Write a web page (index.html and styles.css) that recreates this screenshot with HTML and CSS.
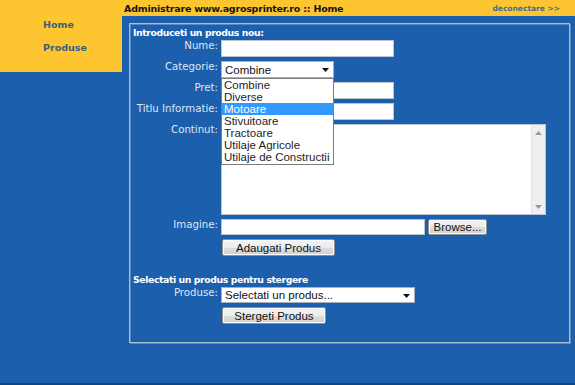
FILE: index.html
```html
<!DOCTYPE html>
<html>
<head>
<meta charset="utf-8">
<link rel="stylesheet" href="styles.css">
</head>
<body>
<div class="page">
  <aside class="sidebar">
    <a class="nav-link" href="#">Home</a>
    <a class="nav-link" href="#">Produse</a>
  </aside>
  <div class="main">
    <header class="topbar">
      <span class="title">Administrare www.agrosprinter.ro :: Home</span>
      <a class="logout" href="#">deconectare &gt;&gt;</a>
    </header>
    <div class="content">
      <div class="panel">
        <div class="section-title">Introduceti un produs nou:</div>
        <div class="form">
          <label class="lbl">Nume:</label>
          <div class="field"><input class="txt w-std" type="text"></div>

          <label class="lbl">Categorie:</label>
          <div class="field">
            <div class="select w-cat">
              <span class="select-val">Combine</span>
              <svg class="arrow" width="7" height="4" viewBox="0 0 7 4"><path d="M0 0h7L3.5 4z" fill="#111"/></svg>
              <ul class="dropdown">
                <li>Combine</li>
                <li>Diverse</li>
                <li class="hl">Motoare</li>
                <li>Stivuitoare</li>
                <li>Tractoare</li>
                <li>Utilaje Agricole</li>
                <li>Utilaje de Constructii</li>
              </ul>
            </div>
          </div>

          <label class="lbl">Pret:</label>
          <div class="field"><input class="txt w-std" type="text"></div>

          <label class="lbl">Titlu Informatie:</label>
          <div class="field"><input class="txt w-std" type="text"></div>

          <label class="lbl">Continut:</label>
          <div class="field">
            <div class="area-box">
              <textarea class="area"></textarea>
              <div class="scrollbar">
                <svg width="7" height="4" viewBox="0 0 7 4"><path d="M0 4h7L3.5 0z" fill="#9a9a9a"/></svg>
                <svg width="7" height="4" viewBox="0 0 7 4"><path d="M0 0h7L3.5 4z" fill="#9a9a9a"/></svg>
              </div>
            </div>
          </div>

          <label class="lbl">Imagine:</label>
          <div class="field file-row">
            <input class="txt w-file" type="text">
            <button class="btn w-browse" type="button">Browse...</button>
          </div>

          <span></span>
          <div class="field"><button class="btn w-add" type="button">Adaugati Produs</button></div>
        </div>

        <div class="section-title second">Selectati un produs pentru stergere</div>
        <div class="form">
          <label class="lbl">Produse:</label>
          <div class="field">
            <div class="select w-prod">
              <span class="select-val">Selectati un produs...</span>
              <svg class="arrow" width="7" height="4" viewBox="0 0 7 4"><path d="M0 0h7L3.5 4z" fill="#111"/></svg>
            </div>
          </div>
          <span></span>
          <div class="field"><button class="btn w-del" type="button">Stergeti Produs</button></div>
        </div>
      </div>
    </div>
  </div>
</div>
</body>
</html>
```
FILE: styles.css
```css
html, body {
  margin: 0;
  padding: 0;
}
body {
  background: #1b5fad;
  font-family: "DejaVu Sans", Verdana, sans-serif;
}
.page {
  display: flex;
  align-items: flex-start;
  height: 383px;
  border-bottom: 2px solid #0f4684;
}
.sidebar {
  width: 122px;
  height: 72px;
  background: #fdc530;
  display: flex;
  flex-direction: column;
  padding: 18px 0 0 43px;
  box-sizing: border-box;
  gap: 10px;
}
.nav-link {
  color: #3d5e78;
  font-weight: bold;
  font-size: 9.5px;
  text-decoration: none;
  line-height: 13px;
}
.main {
  flex: 1;
  display: flex;
  flex-direction: column;
}
.topbar {
  height: 16px;
  background: #fdc530;
  display: flex;
  align-items: center;
  justify-content: space-between;
  padding: 0 15px 0 2px;
}
.title {
  font-weight: bold;
  font-size: 9.5px;
  letter-spacing: -0.22px;
  color: #151515;
}
.logout {
  font-weight: bold;
  font-size: 7.5px;
  color: #3d6f8c;
  text-decoration: none;
}
.content {
  padding: 7px 5px 0 7px;
}
.panel {
  width: 441px;
  height: 320px;
  box-sizing: border-box;
  border: 1px solid #a8c0d2;
  box-shadow: inset 1px 1px 0 #5f86b4, 1px 1px 0 #5f86b4;
  padding: 3px 0 0 3px;
}
.section-title {
  color: #ffffff;
  font-weight: bold;
  font-size: 9.3px;
  letter-spacing: -0.4px;
  line-height: 11px;
  margin-bottom: 2px;
}
.section-title.second {
  margin-top: 18px;
  margin-bottom: 2px;
}
.form {
  display: grid;
  grid-template-columns: 85px auto;
  column-gap: 3px;
  row-gap: 4px;
  align-items: start;
}
.lbl {
  color: #dde7f2;
  font-size: 10.2px;
  text-align: right;
  line-height: 10px;
  margin-left: -8px;
  padding-top: 1px;
}
.field {
  display: flex;
  align-items: center;
}
.txt {
  height: 17px;
  box-sizing: border-box;
  border: 1px solid #b9c4cf;
  background: #fff;
  margin: 0;
  padding: 0 2px;
}
.w-std { width: 173px; }
.w-file { width: 204px; height: 16px; }
.file-row { gap: 3px; }
.select {
  position: relative;
  height: 17px;
  box-sizing: border-box;
  background: #fff;
  border: 1px solid #a5b1bd;
  font-family: "Liberation Sans", Arial, sans-serif;
  font-size: 11.5px;
  color: #111;
  display: flex;
  align-items: center;
  padding-left: 3px;
}
.w-cat { width: 113px; }
.w-prod { width: 194px; height: 16px; }
.select-val { flex: 1; line-height: 14px; }
.arrow {
  position: absolute;
  right: 4px;
  top: 6px;
}
.dropdown {
  position: absolute;
  left: -1px;
  top: 16px;
  width: 113px;
  box-sizing: border-box;
  margin: 0;
  padding: 0 0 1px;
  list-style: none;
  background: #fff;
  border: 1px solid #7d7d7d;
  z-index: 5;
}
.dropdown li {
  line-height: 12px;
  height: 12px;
  padding-left: 2px;
  color: #1e1e1e;
  font-family: "Liberation Sans", Arial, sans-serif;
  font-size: 11.5px;
}
.dropdown li.hl {
  background: #3399ff;
  color: #fff;
}
.area-box {
  width: 325px;
  height: 91px;
  box-sizing: border-box;
  border: 1px solid #b9c4cf;
  background: #fff;
  display: flex;
}
.area {
  flex: 1;
  border: 0;
  margin: 0;
  padding: 0;
  resize: none;
  outline: none;
  background: #fff;
}
.scrollbar {
  width: 14px;
  background: #efefef;
  border-left: 1px solid #e2e2e2;
  display: flex;
  flex-direction: column;
  justify-content: space-between;
  align-items: center;
  padding: 6px 0 5px;
  box-sizing: border-box;
}
.btn {
  height: 17px;
  box-sizing: border-box;
  margin: 0;
  padding: 0;
  border: 1px solid #8e8f8f;
  border-radius: 2px;
  background: linear-gradient(#f4f4f4 0%, #ececec 50%, #dcdcdc 51%, #d0d0d0 100%);
  font-family: "Liberation Sans", Arial, sans-serif;
  font-size: 11.5px;
  color: #111;
  box-shadow: inset 0 0 0 1px #fcfcfc;
}
.w-browse { width: 59px; height: 16px; }
.w-add { width: 113px; margin-left: 1px; }
.w-del { width: 104px; margin-left: 1px; }
```
